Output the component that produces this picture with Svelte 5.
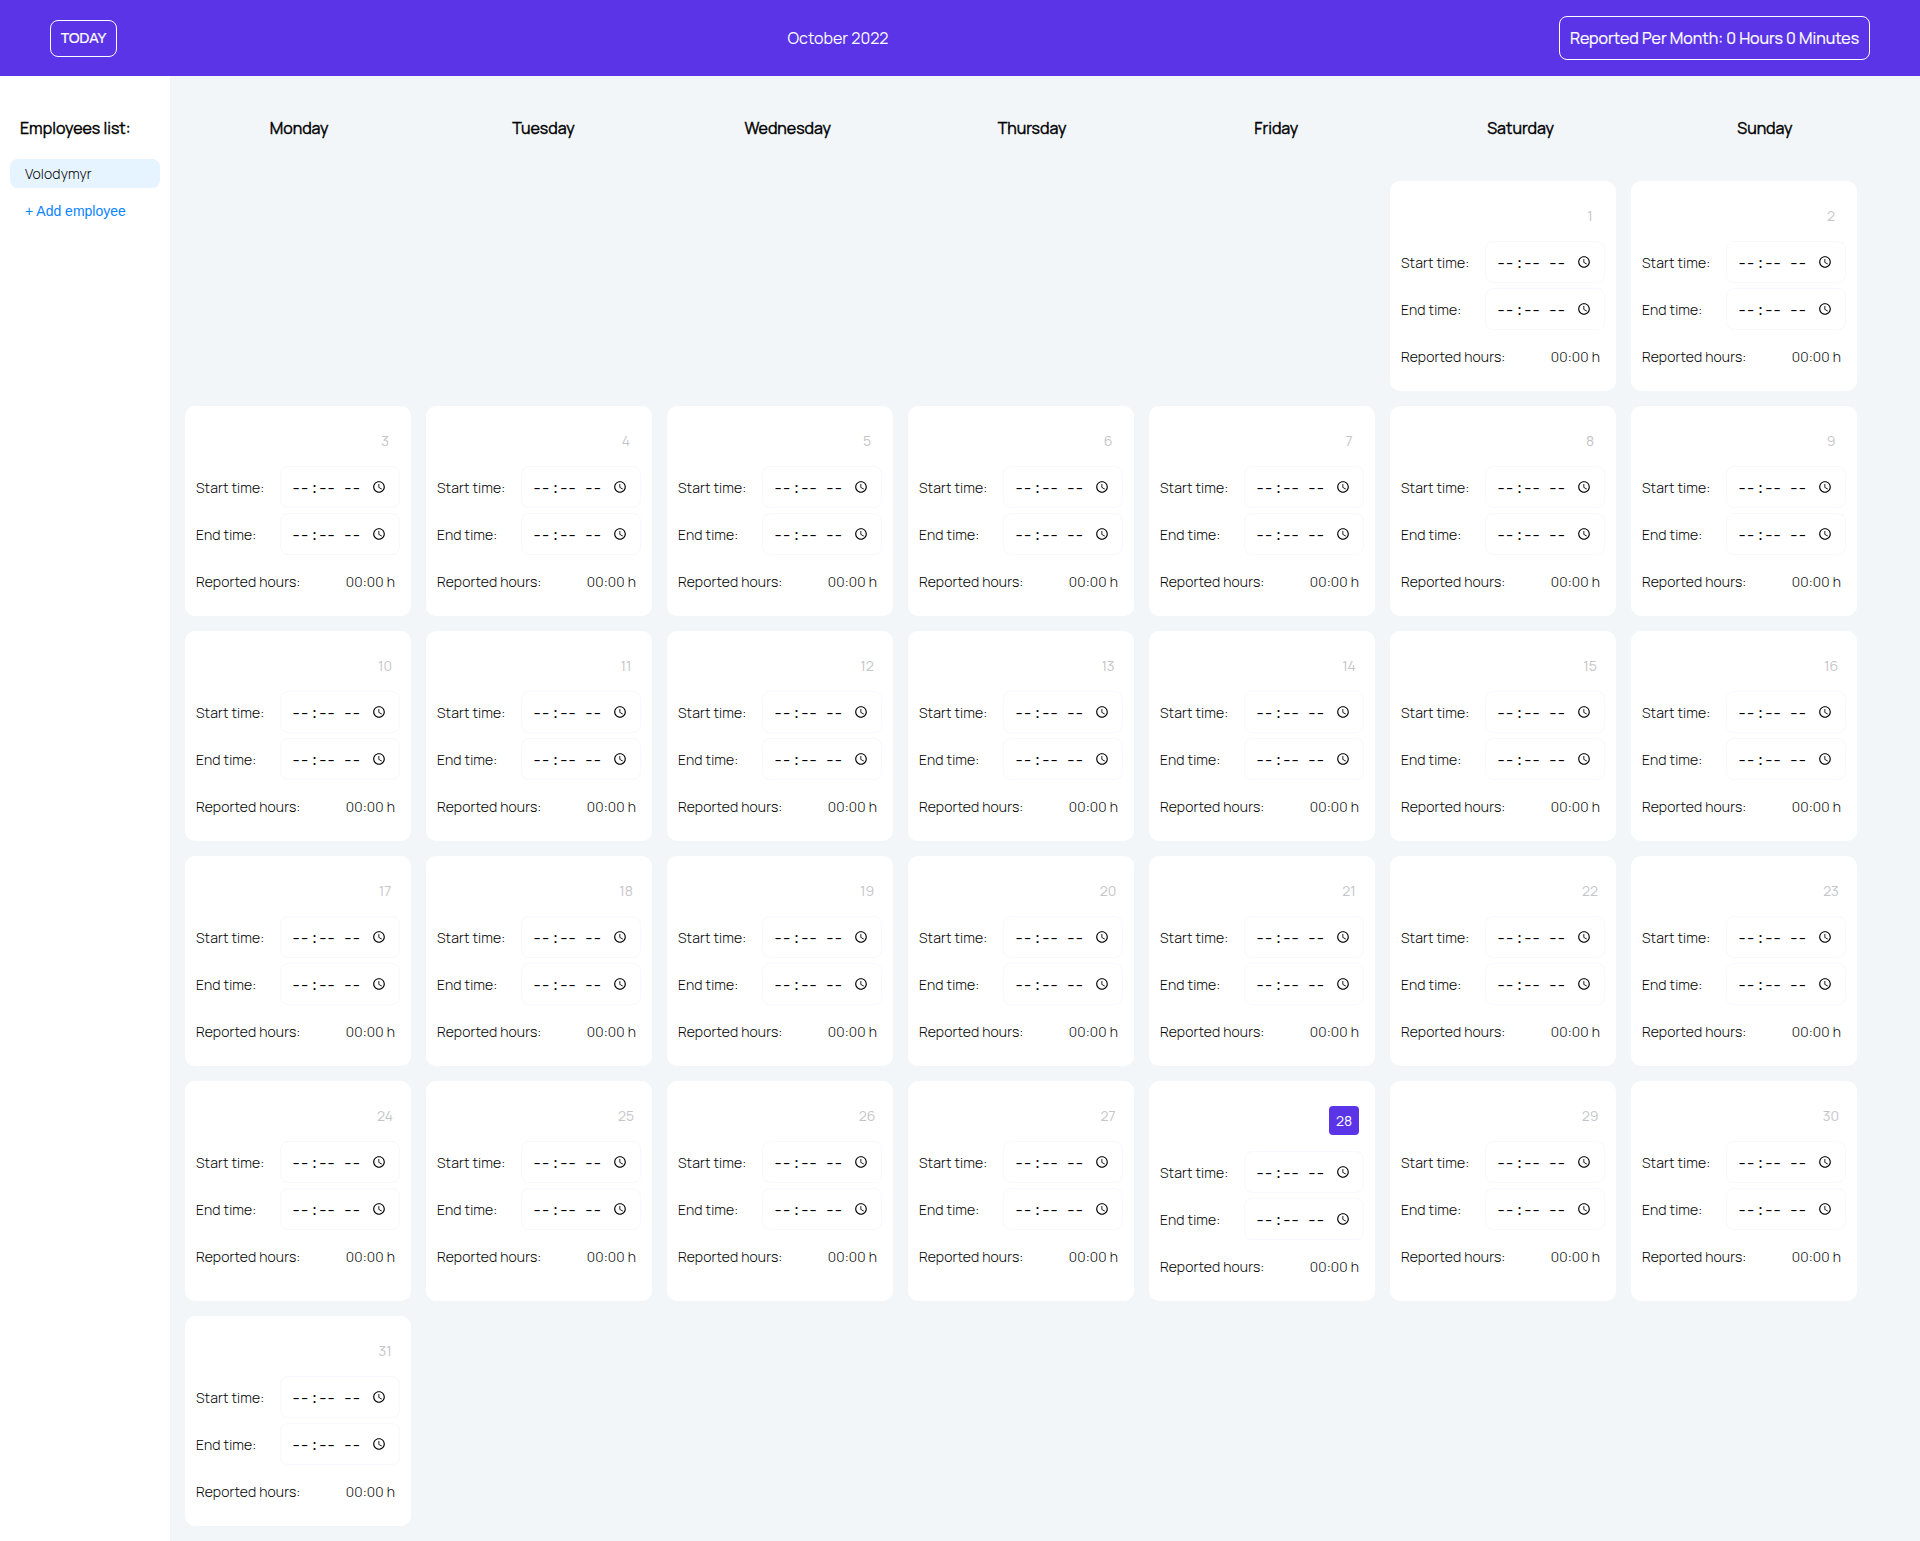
<script>
  const weekdays = ['Monday', 'Tuesday', 'Wednesday', 'Thursday', 'Friday', 'Saturday', 'Sunday'];
  const today = 28;
  const days = Array.from({ length: 31 }, (_, i) => i + 1);
</script>

<div class="page">
  <header>
    <button class="today">TODAY</button>
    <div class="month">October 2022</div>
    <div class="total">Reported Per Month: 0 Hours 0 Minutes</div>
  </header>
  <div class="content">
    <aside>
      <h2>Employees list:</h2>
      <div class="employee">Volodymyr</div>
      <button class="add">+ Add employee</button>
    </aside>
    <main>
      <div class="weekdays">
        {#each weekdays as name}
          <div>{name}</div>
        {/each}
      </div>
      <div class="calendar">
        {#each days as day}
          <section class="card" class:first={day === 1} class:current={day === today}>
            <div class="date"><span>{day}</span></div>
            <div class="row">
              <span>Start time:</span>
              <input type="time" aria-label="Start time" />
            </div>
            <div class="row">
              <span>End time:</span>
              <input type="time" aria-label="End time" />
            </div>
            <div class="row">
              <span>Reported hours:</span>
              <span class="hours">00:00 h</span>
            </div>
          </section>
        {/each}
      </div>
    </main>
  </div>
</div>

<style>
  :global(body) {
    background: #f2f6f9;
  }
  .page {
    width: 1920px;
    height: 1541px;
    overflow: hidden;
    display: flex;
    flex-direction: column;
    font-family: Manrope, Inter, sans-serif;
    color: #000;
  }
  * {
    box-sizing: border-box;
  }
  header {
    height: 76px;
    flex: none;
    padding: 0 50px;
    background: #5b34e8;
    color: #fff;
    display: flex;
    align-items: center;
    justify-content: space-between;
    font-size: 16px;
  }
  button {
    font-family: "Liberation Sans", Arial, sans-serif;
    font-size: 14px;
    background: none;
    border: 0;
    padding: 0;
  }
  .today {
    width: 67px;
    height: 37px;
    border: 1px solid #fff;
    border-radius: 8px;
    color: #fff;
    letter-spacing: -0.3px;
    -webkit-text-stroke: 0.2px;
  }
  .total {
    width: 311px;
    height: 44px;
    border: 1px solid #fff;
    border-radius: 8px;
    display: flex;
    align-items: center;
    justify-content: center;
    white-space: nowrap;
    -webkit-text-stroke: 0.2px;
  }
  .content {
    flex: 1;
    display: flex;
  }
  aside {
    width: 170px;
    flex: none;
    background: #fff;
    padding: 40px 10px 0;
    display: flex;
    flex-direction: column;
  }
  h2 {
    margin: 0 0 19px 10px;
    font-size: 16px;
    line-height: 24px;
    font-weight: 400;
    -webkit-text-stroke: 0.4px;
  }
  .employee {
    height: 29px;
    border-radius: 8px;
    background: #e6f4ff;
    padding-left: 15px;
    font-size: 14px;
    line-height: 30px;
    font-weight: 300;
    letter-spacing: 0.13px;
  }
  .add {
    margin: 11px 0 0 15px;
    color: #0a84ff;
    line-height: 24px;
    text-align: left;
  }
  main {
    flex: 1;
  }
  .weekdays {
    width: 1710px;
    margin-left: 7px;
    padding-top: 40px;
    height: 105px;
    display: grid;
    grid-template-columns: repeat(7, 1fr);
    text-align: center;
    font-size: 16px;
    line-height: 24px;
    font-weight: 400;
    -webkit-text-stroke: 0.4px;
  }
  .calendar {
    margin-left: 15px;
    display: grid;
    grid-template-columns: repeat(7, 226px);
    gap: 15px;
  }
  .card {
    min-height: 210px;
    background: #fff;
    border-radius: 10px;
    padding: 25px 11px 0;
    font-size: 14px;
    font-weight: 300;
  }
  .card.first {
    grid-column: 6;
  }
  .date {
    display: flex;
    justify-content: flex-end;
    height: 35px;
    padding-right: 5px;
    color: #c5c5c9;
    font-weight: 400;
    line-height: 19px;
  }
  .date span {
    width: 20px;
    text-align: center;
  }
  .current {
    height: 220px;
  }
  .current .date {
    height: 45px;
  }
  .current .date span {
    width: 30px;
    height: 29px;
    line-height: 29px;
    border-radius: 4px;
    background: #5b34e8;
    color: #fff;
  }
  .row {
    height: 47px;
    display: flex;
    align-items: flex-start;
    justify-content: space-between;
    line-height: 44px;
    white-space: nowrap;
    letter-spacing: 0.13px;
  }
  input {
    width: 120px;
    height: 42px;
    border: 1px solid #f8f8ff;
    border-radius: 8px;
    background: #fff;
    padding: 0 9px 0 10px;
    font-family: "Roboto Mono", "Liberation Mono", monospace;
    font-size: 14px;
    letter-spacing: -0.8px;
    color: #000;
  }
  input::-webkit-datetime-edit-minute-field {
    margin-left: -0.5px;
  }
  input::-webkit-datetime-edit-ampm-field {
    margin-left: 2px;
  }
  .hours {
    padding-right: 5px;
  }
</style>
